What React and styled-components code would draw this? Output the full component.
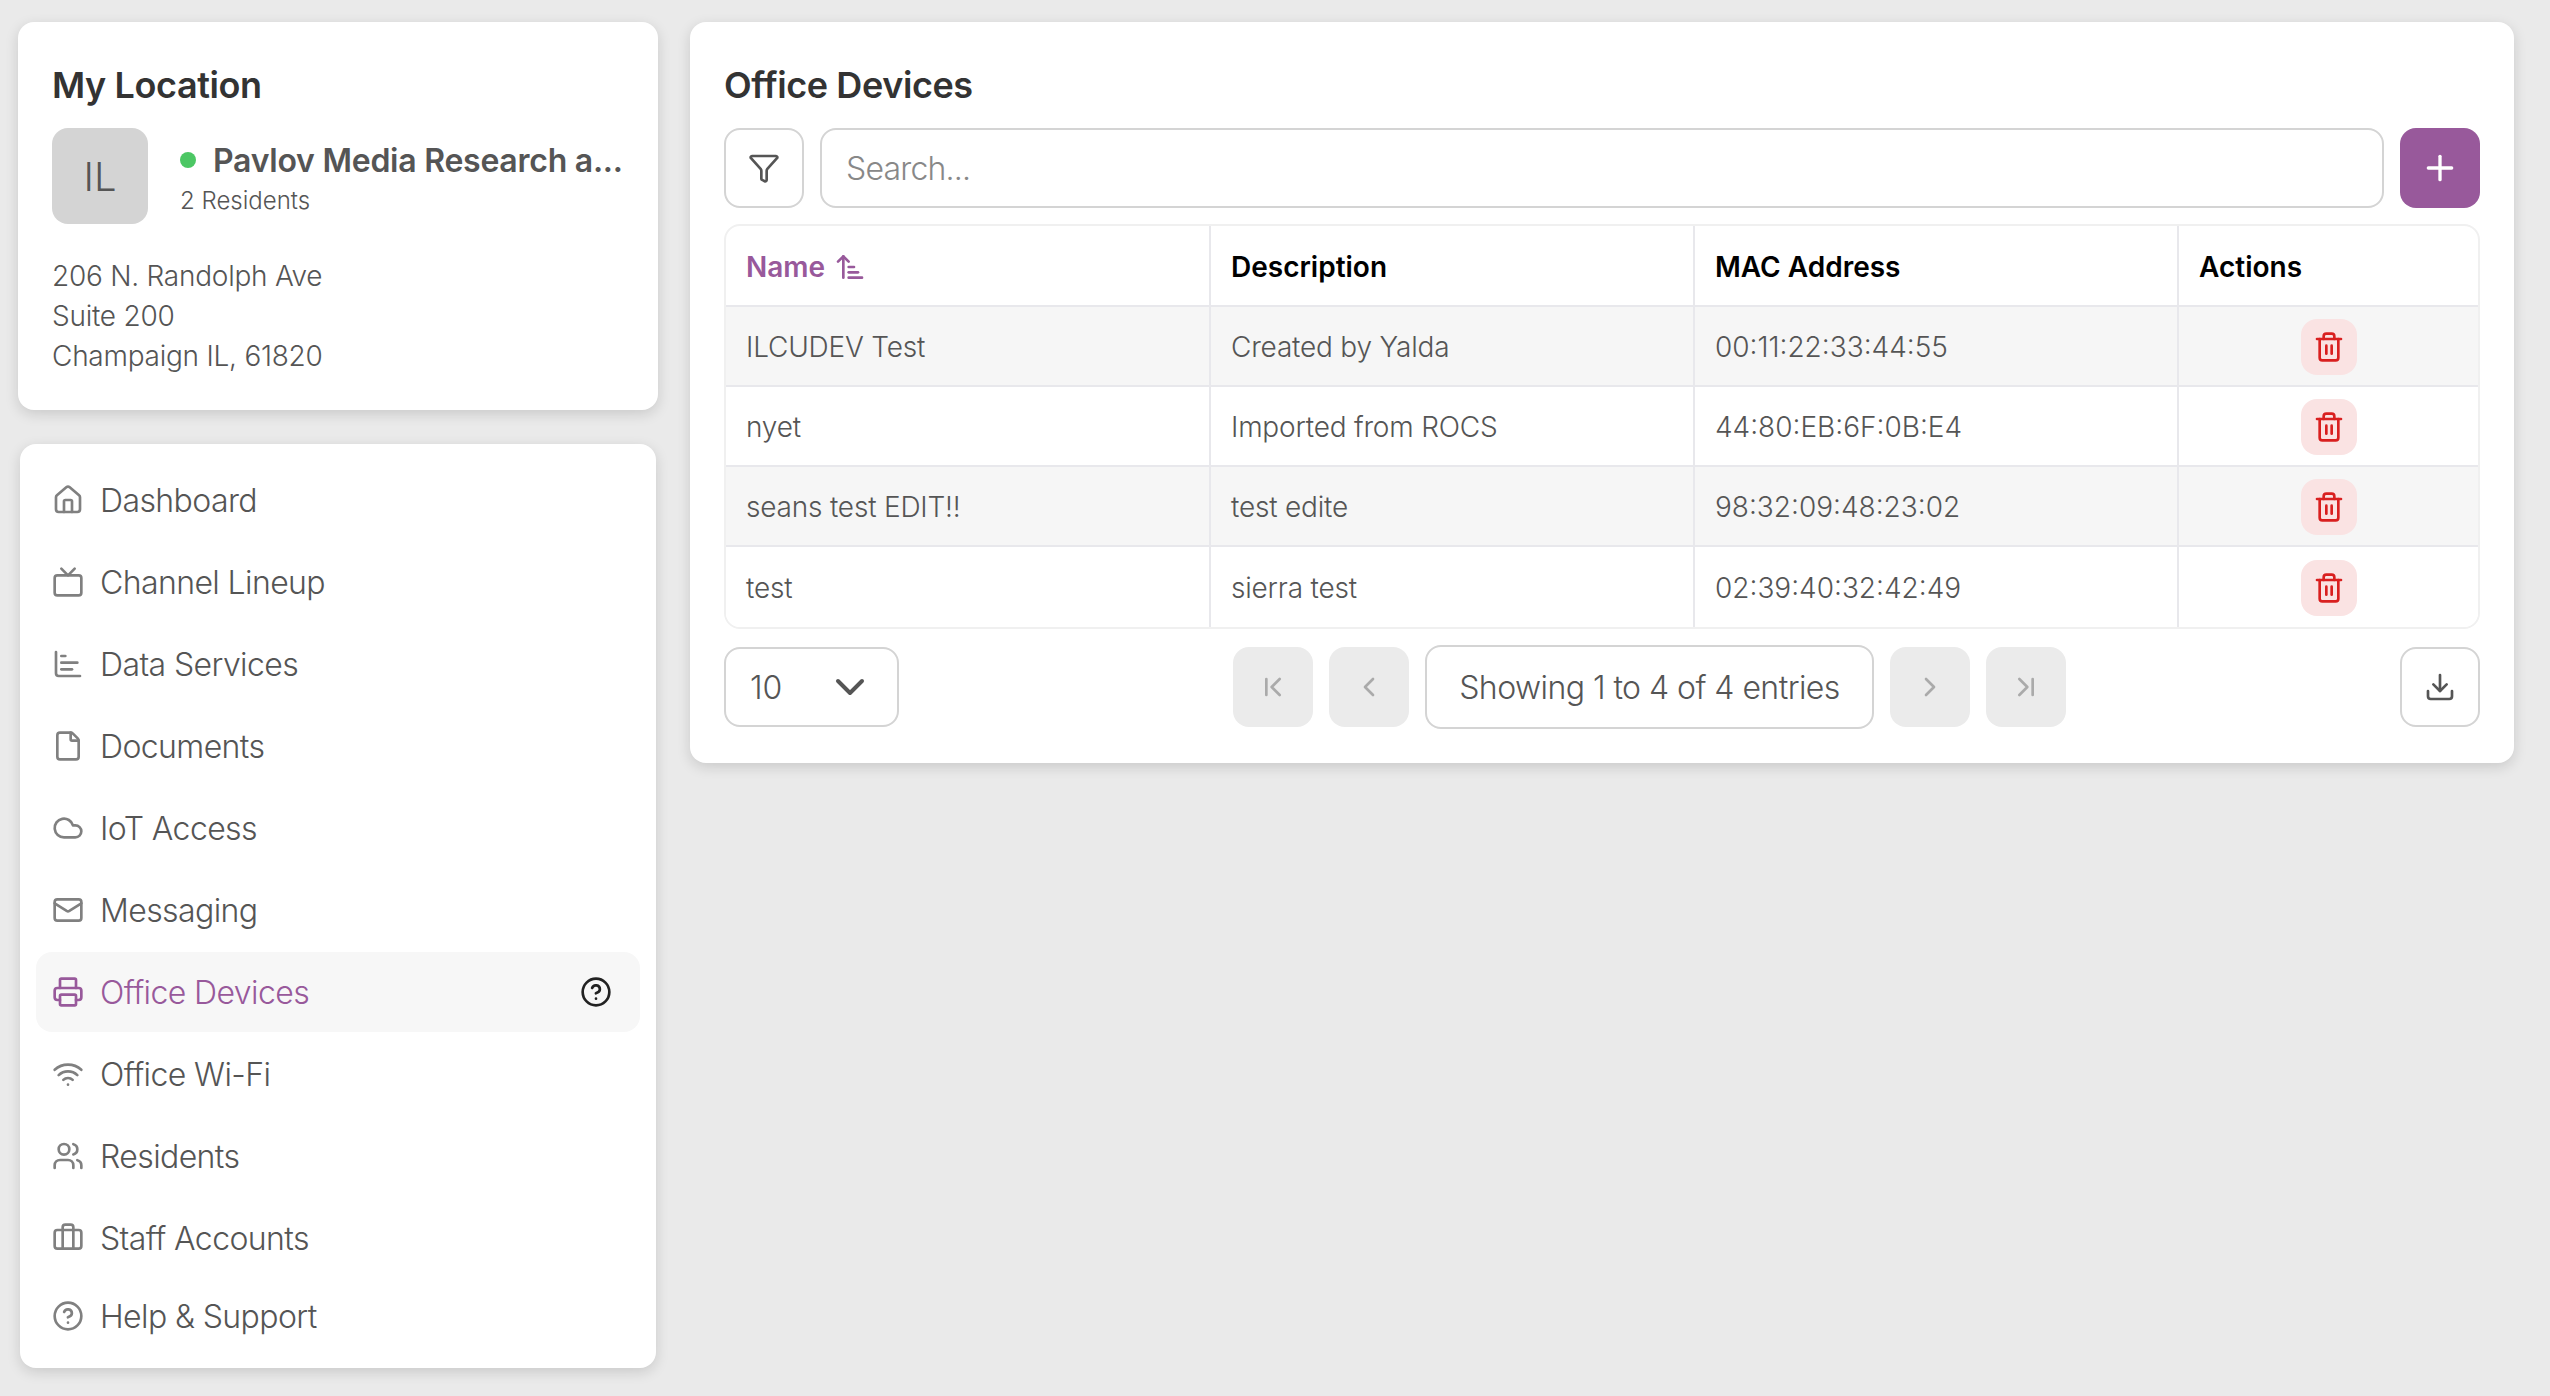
import styled, { createGlobalStyle } from "styled-components";
import {
  House, Tv, ChartBar, File, Cloud, Mail, Printer, Wifi, Users, Briefcase, CircleHelp,
  Funnel, Plus, ArrowUpNarrowWide, Trash2, ChevronDown, ChevronFirst, ChevronLeft,
  ChevronRight, ChevronLast, Download,
} from "lucide-react";

const purple = "#98599b";

const GlobalStyle = createGlobalStyle`
  html, body { margin: 0; padding: 0; background: #eaeaea; }
  body { font-family: Inter, "Noto Sans", sans-serif; color: #555; }
  * { box-sizing: border-box; }
`;

const Page = styled.div`
  display: flex;
  align-items: flex-start;
  gap: 32px;
  width: 2550px;
  height: 1396px;
  padding: 22px 36px 0 18px;
`;

const Side = styled.aside`
  display: flex;
  flex-direction: column;
  align-items: center;
  gap: 34px;
  width: 640px;
  flex: none;
`;

const Card = styled.section`
  background: #fff;
  border-radius: 16px;
  box-shadow: 0 4px 14px rgba(0, 0, 0, 0.14);
`;

const LocationCard = styled(Card)`
  width: 100%;
  height: 388px;
  padding: 40px 35px 0 34px;
`;

const Title = styled.h2`
  margin: 0;
  font-size: 36px;
  line-height: 46px;
  font-weight: 600;
  letter-spacing: -0.4px;
  color: #333;
`;

const LocationRow = styled.div`
  display: flex;
  align-items: center;
  gap: 32px;
  margin-top: 20px;
`;

const Avatar = styled.div`
  display: flex;
  align-items: center;
  justify-content: center;
  width: 96px;
  height: 96px;
  flex: none;
  border-radius: 16px;
  background: #d4d4d4;
  font-size: 40px;
  font-weight: 300;
  color: #555;
`;

const LocationInfo = styled.div`
  min-width: 0;
  flex: 1;
  padding-top: 4px;
`;

const NameLine = styled.div`
  display: flex;
  align-items: center;
  gap: 17px;
  height: 40px;
`;

const Dot = styled.span`
  width: 16px;
  height: 16px;
  flex: none;
  border-radius: 50%;
  background: #4cc764;
`;

const LocationName = styled.span`
  font-size: 32px;
  font-weight: 600;
  letter-spacing: -0.25px;
  color: #555;
  white-space: nowrap;
`;

const Residents = styled.div`
  margin-top: 6px;
  font-size: 24px;
  line-height: 30px;
  font-weight: 300;
`;

const Address = styled.div`
  margin-top: 32px;
  font-size: 28px;
  line-height: 40px;
  font-weight: 300;
  letter-spacing: -0.25px;
`;

const NavCard = styled(Card)`
  display: flex;
  flex-direction: column;
  gap: 2px;
  width: 636px;
  height: 924px;
  padding: 16px 16px 0;
`;

const NavItem = styled.a`
  display: flex;
  align-items: center;
  gap: 16px;
  flex: none;
  height: 80px;
  padding: 0 28px 0 16px;
  margin-top: ${(p) => (p.$tight ? "-4px" : "0")};
  border-radius: 16px;
  font-size: 32px;
  font-weight: 300;
  letter-spacing: -0.6px;
  background: ${(p) => (p.$active ? "#f7f7f7" : "transparent")};
  color: ${(p) => (p.$active ? purple : "#555")};
  svg { flex: none; color: ${(p) => (p.$active ? purple : "#808080")}; }
`;

const NavLabel = styled.span`
  flex: 1;
  padding-top: 1px;
`;

const HelpMark = styled(CircleHelp)`
  && { color: #222; }
`;

const Main = styled(Card)`
  flex: 1;
  height: 741px;
  padding: 40px 34px 0 34px;
`;

const Toolbar = styled.div`
  display: flex;
  gap: 16px;
  margin-top: 20px;
`;

const OutlineButton = styled.button`
  display: flex;
  align-items: center;
  justify-content: center;
  width: 80px;
  height: 80px;
  flex: none;
  padding: 0;
  background: #fff;
  border: 2px solid #d4d4d4;
  border-radius: 16px;
  color: #555;
`;

const AddButton = styled(OutlineButton)`
  background: ${purple};
  border: 0;
  color: #fff;
`;

const Search = styled.input`
  flex: 1;
  min-width: 0;
  height: 80px;
  padding: 0 24px;
  border: 2px solid #d4d4d4;
  border-radius: 16px;
  font: 300 32px Inter, sans-serif;
  letter-spacing: -0.8px;
  color: #555;
  &::placeholder { color: #888; opacity: 1; }
`;

const TableWrap = styled.div`
  margin-top: 16px;
  border: 2px solid #f0f0f0;
  border-radius: 16px;
  overflow: hidden;
`;

const Table = styled.table`
  width: 100%;
  table-layout: fixed;
  border-collapse: separate;
  border-spacing: 0;
`;

const Th = styled.th`
  height: 81px;
  padding: 2px 20px 0;
  text-align: left;
  font-size: 28px;
  font-weight: 600;
  color: ${(p) => (p.$sorted ? purple : "#000")};
  border-right: 2px solid #e8e8ec;
  border-bottom: 2px solid #e8e8ec;
  &:last-child { border-right: 0; }
`;

const SortLabel = styled.span`
  display: inline-flex;
  align-items: center;
  gap: 9px;
`;

const Tr = styled.tr`
  background: ${(p) => (p.$striped ? "#f6f6f6" : "#fff")};
  &:last-child td { border-bottom: 0; }
`;

const Td = styled.td`
  height: 80px;
  padding: 2px 20px 0;
  font-size: 28px;
  font-weight: 300;
  letter-spacing: ${(p) => (p.$mac ? "0" : "-0.2px")};
  color: #555;
  border-right: 2px solid #e8e8ec;
  border-bottom: 2px solid #e8e8ec;
  &:last-child { border-right: 0; }
`;

const DeleteButton = styled.button`
  display: flex;
  align-items: center;
  justify-content: center;
  width: 56px;
  height: 56px;
  margin: 0 auto;
  padding: 0;
  border: 0;
  border-radius: 16px;
  background: #fae3e3;
  color: #d92020;
`;

const Footer = styled.div`
  display: flex;
  align-items: center;
  justify-content: space-between;
  margin-top: 16px;
`;

const PageSize = styled.div`
  display: flex;
  align-items: center;
  justify-content: space-between;
  width: 175px;
  height: 80px;
  padding: 0 23px 0 24px;
  border: 2px solid #d4d4d4;
  border-radius: 16px;
  font-size: 32px;
  font-weight: 300;
`;

const Pager = styled.div`
  display: flex;
  align-items: center;
  gap: 16px;
`;

const PagerButton = styled.button`
  display: flex;
  align-items: center;
  justify-content: center;
  width: 80px;
  height: 80px;
  padding: 0;
  border: 0;
  border-radius: 16px;
  background: #ebebeb;
  color: #aaa;
`;

const PagerInfo = styled.div`
  display: flex;
  align-items: center;
  height: 84px;
  padding: 0 32px;
  border: 2px solid #d4d4d4;
  border-radius: 16px;
  font-size: 32px;
  font-weight: 300;
  letter-spacing: -0.55px;
  white-space: nowrap;
`;

const navItems = [
  ["Dashboard", House],
  ["Channel Lineup", Tv],
  ["Data Services", ChartBar],
  ["Documents", File],
  ["IoT Access", Cloud],
  ["Messaging", Mail],
  ["Office Devices", Printer],
  ["Office Wi-Fi", Wifi],
  ["Residents", Users],
  ["Staff Accounts", Briefcase],
  ["Help & Support", CircleHelp],
];

const devices = [
  ["ILCUDEV Test", "Created by Yalda", "00:11:22:33:44:55"],
  ["nyet", "Imported from ROCS", "44:80:EB:6F:0B:E4"],
  ["seans test EDIT!!", "test edite", "98:32:09:48:23:02"],
  ["test", "sierra test", "02:39:40:32:42:49"],
];

export default function App() {
  return (
    <>
      <GlobalStyle />
      <Page>
        <Side>
          <LocationCard>
            <Title>My Location</Title>
            <LocationRow>
              <Avatar>IL</Avatar>
              <LocationInfo>
                <NameLine>
                  <Dot />
                  <LocationName>Pavlov Media Research a...</LocationName>
                </NameLine>
                <Residents>2 Residents</Residents>
              </LocationInfo>
            </LocationRow>
            <Address>
              206 N. Randolph Ave
              <br />
              Suite 200
              <br />
              Champaign IL, 61820
            </Address>
          </LocationCard>
          <NavCard as="nav">
            {navItems.map(([label, Icon]) => (
              <NavItem key={label} $active={label === "Office Devices"} $tight={label === "Help & Support"}>
                <Icon size={32} />
                <NavLabel>{label}</NavLabel>
                {label === "Office Devices" && <HelpMark size={32} />}
              </NavItem>
            ))}
          </NavCard>
        </Side>
        <Main>
          <Title>Office Devices</Title>
          <Toolbar>
            <OutlineButton>
              <Funnel size={32} />
            </OutlineButton>
            <Search placeholder="Search..." />
            <AddButton>
              <Plus size={40} />
            </AddButton>
          </Toolbar>
          <TableWrap>
            <Table>
              <colgroup>
                <col style={{ width: 485 }} />
                <col style={{ width: 484 }} />
                <col style={{ width: 484 }} />
                <col />
              </colgroup>
              <thead>
                <tr>
                  <Th $sorted>
                    <SortLabel>
                      Name <ArrowUpNarrowWide size={32} />
                    </SortLabel>
                  </Th>
                  <Th>Description</Th>
                  <Th>MAC Address</Th>
                  <Th>Actions</Th>
                </tr>
              </thead>
              <tbody>
                {devices.map((d, i) => (
                  <Tr key={d[0]} $striped={i % 2 === 0}>
                    <Td>{d[0]}</Td>
                    <Td>{d[1]}</Td>
                    <Td $mac>{d[2]}</Td>
                    <Td>
                      <DeleteButton>
                        <Trash2 size={32} />
                      </DeleteButton>
                    </Td>
                  </Tr>
                ))}
              </tbody>
            </Table>
          </TableWrap>
          <Footer>
            <PageSize>
              10
              <ChevronDown size={48} />
            </PageSize>
            <Pager>
              <PagerButton><ChevronFirst size={32} /></PagerButton>
              <PagerButton><ChevronLeft size={32} /></PagerButton>
              <PagerInfo>Showing 1 to 4 of 4 entries</PagerInfo>
              <PagerButton><ChevronRight size={32} /></PagerButton>
              <PagerButton><ChevronLast size={32} /></PagerButton>
            </Pager>
            <OutlineButton>
              <Download size={32} />
            </OutlineButton>
          </Footer>
        </Main>
      </Page>
    </>
  );
}
